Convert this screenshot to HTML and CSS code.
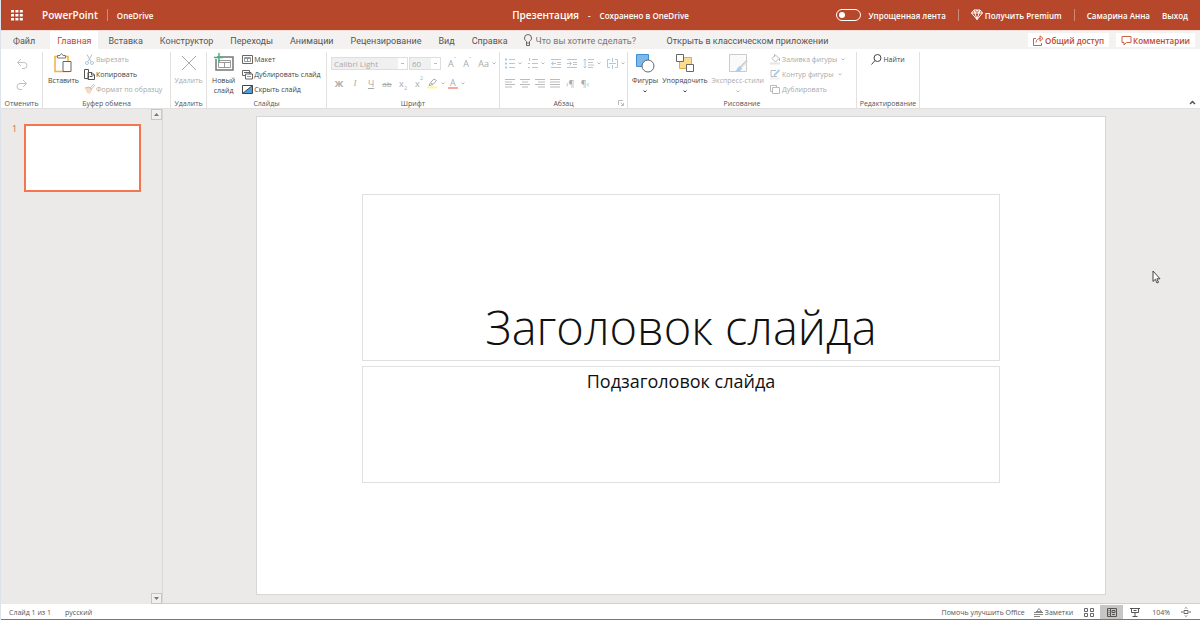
FILE: index.html
```html
<!DOCTYPE html>
<html lang="ru">
<head>
<meta charset="utf-8">
<title>Презентация - PowerPoint</title>
<link rel="stylesheet" href="styles.css">
</head>
<body>
<div class="app">
  <header class="header">
    <div class="header-left">
      <button class="waffle" aria-label="Приложения">
        <svg width="12" height="12" viewBox="0 0 12 12" fill="#fff"><path d="M0 1h3v2.600H0zM4.400 1h3v2.600h-3zM8.800 1h3v2.600h-3zM0 5h3v2.600H0zM4.400 5h3v2.600h-3zM8.800 5h3v2.600h-3zM0 9h3v2.600H0zM4.400 9h3v2.600h-3zM8.800 9h3v2.600h-3z"/></svg>
      </button>
      <a class="brand" href="#">PowerPoint</a>
      <span class="bar"></span>
      <a class="place" href="#">OneDrive</a>
    </div>
    <div class="header-title"><span class="doc-name">Презентация</span><span>-</span><span>Сохранено в OneDrive</span></div>
    <div class="header-right">
      <label class="switch"><input type="checkbox" class="switch-box"><span>Упрощенная лента</span></label>
      <span class="bar"></span>
      <button class="premium">
        <svg width="12" height="12" viewBox="0 0 12 12" fill="none" stroke="#fff"><path d="M3 1h6l2.500 3L6 10.500.5 4zM.5 4h11M3 1l1 3 2 6.500L8 4l1-3M4 4l2-3 2 3"/></svg>
        <span>Получить Premium</span>
      </button>
      <span class="bar"></span>
      <button class="user">Самарина Анна</button>
      <button class="exit">Выход</button>
    </div>
  </header>

  <nav class="tabs">
    <button class="tab tab-file">Файл</button>
    <button class="tab tab-active">Главная</button>
    <button class="tab">Вставка</button>
    <button class="tab">Конструктор</button>
    <button class="tab">Переходы</button>
    <button class="tab">Анимации</button>
    <button class="tab">Рецензирование</button>
    <button class="tab">Вид</button>
    <button class="tab">Справка</button>
    <label class="tell-me">
      <svg width="10" height="13" viewBox="0 0 10 13" fill="none" stroke="#666"><path d="M3.500 9V7.500C2.500 6.500 1.500 5.800 1.500 4a3.500 3.500 0 0 1 7 0c0 1.800-1 2.500-2 3.500V9zM3.500 9v2.500h3V9"/></svg>
      <input class="tell-input" type="text" placeholder="Что вы хотите сделать?">
    </label>
    <button class="tab">Открыть в классическом приложении</button>
    <div class="tab-actions">
      <button class="action">
        <svg width="11" height="11" viewBox="0 0 11 11" fill="none" stroke="#c9634a"><path d="M3 3.500H.5v7h8V8M3 7.500c.3-3 2-4 4.500-4M7 .8l3 2.700-3 2.700V.8"/></svg>
        <span>Общий доступ</span>
      </button>
      <button class="action">
        <svg width="11" height="11" viewBox="0 0 11 11" fill="none" stroke="#c9634a"><path d="M1 1.500h9v6H5.500L3 10V7.500H1z"/></svg>
        <span>Комментарии</span>
      </button>
    </div>
  </nav>

  <section class="ribbon">
    <div class="group g-undo">
      <div class="group-body undo-body">
        <button class="icon-btn" aria-label="Отменить"><svg width="12" height="12" viewBox="0 0 12 12" fill="none" stroke="#c2c2c2"><path d="M5 1L1.500 4.500 5 8M1.500 4.500H8a3 3 0 0 1 0 6H6"/></svg></button>
        <button class="icon-btn" aria-label="Вернуть"><svg width="12" height="12" viewBox="0 0 12 12" fill="none" stroke="#c2c2c2"><path d="M7 1l3.500 3.500L7 8M10.500 4.500H4a3 3 0 0 0 0 6h2"/></svg></button>
      </div>
      <div class="group-label">Отменить</div>
    </div>

    <div class="group g-clip">
      <div class="group-body">
        <button class="big">
          <svg width="20" height="20" viewBox="0 0 20 20" fill="#fff"><path d="M2 3.500h13v15H2z" stroke="#f0b04a" stroke-width="1.500"/><path d="M4.500 5V2.500H7Q8.500-1 10 2.500h2.500V5z" stroke="#777"/><path d="M10 8.500h8v10h-8z" stroke="#666"/></svg>
          <span>Вставить</span>
        </button>
        <div class="rows">
          <button class="row off"><svg width="11" height="11" viewBox="0 0 11 11" fill="none"><path d="M3 .5l4 7M8 .5l-4 7" stroke="#bbb"/><circle cx="3" cy="9" r="1.500" stroke="#a6cbea"/><circle cx="8" cy="9" r="1.500" stroke="#a6cbea"/></svg><span>Вырезать</span></button>
          <button class="row"><svg width="11" height="11" viewBox="0 0 11 11" fill="#fff" stroke="#555"><path d="M.5.5h4v9h-4zM4 3.500h4l2.500 2.500v4.500H4zM7.500 3.500V6h3M5.500 7.500h3"/></svg><span>Копировать</span></button>
          <button class="row off"><svg width="11" height="11" viewBox="0 0 11 11"><path d="M1 4l4-1 3 3-2 4-3-1z" fill="#fbd9bf"/><path d="M5 3l3 3M6 4l3.500-3.500 1 1L7.500 5M1 4l4-1" stroke="#c5bdb8" fill="none"/></svg><span>Формат по образцу</span></button>
        </div>
      </div>
      <div class="group-label">Буфер обмена</div>
    </div>

    <div class="group g-delete">
      <div class="group-body">
        <button class="big off">
          <svg width="20" height="20" viewBox="0 0 20 20" fill="none" stroke="#aaa"><path d="M3 3l14 14M17 3L3 17"/></svg>
          <span>Удалить</span>
        </button>
      </div>
      <div class="group-label">Удалить</div>
    </div>

    <div class="group g-slides">
      <div class="group-body">
        <button class="big">
          <svg width="20" height="20" viewBox="0 0 20 20" fill="none"><path d="M3 4h16v13H2V6" stroke="#777" stroke-width="1.500"/><path d="M4.500 7.500h12v7h-12zM4.500 9.500h12M10.500 9.500v5" stroke="#999"/><path d="M5 0v9M0 4.500h9" stroke="#43b581" stroke-width="1.500"/></svg>
          <span>Новый<br>слайд</span>
        </button>
        <div class="rows">
          <button class="row"><svg width="11" height="11" viewBox="0 0 11 11" fill="none" stroke="#666"><path d="M.5 1.500h10v8H.5z"/><path d="M2.500 3.500h6v4h-6zM2.500 4.500h6M5.500 4.500v3" stroke="#999"/></svg><span>Макет</span></button>
          <button class="row"><svg width="11" height="11" viewBox="0 0 11 11" fill="#fff" stroke="#666"><path d="M.5 1.500h7v5h-7zM2 3.500h7V5"/><path d="M3.500 5h7v5h-7z"/><path d="M5 7.500h4" stroke="#999"/></svg><span>Дублировать слайд</span></button>
          <button class="row"><svg width="11" height="11" viewBox="0 0 11 11"><path d="M.5 1.500h10v8H.5z" fill="#fff"/><path d="M10.500 1.500v8H.5z" fill="#4c9fe0"/><path d="M.5 1.500h10v8H.5zM.5 9.500l10-8" stroke="#444" fill="none"/></svg><span>Скрыть слайд</span></button>
        </div>
      </div>
      <div class="group-label">Слайды</div>
    </div>

    <div class="group g-font">
      <div class="group-body tool-body">
        <div class="tools font-top">
          <select class="pick pick-font" aria-label="Шрифт" disabled><option>Calibri Light</option></select>
          <select class="pick pick-size" aria-label="Размер шрифта" disabled><option>60</option></select>
          <button class="tool">A<sup>ˆ</sup></button>
          <button class="tool">A<sup>ˇ</sup></button>
          <button class="tool tool-case">Aa<svg class="chev"><use href="#chev"/></svg></button>
        </div>
        <div class="tools font-bottom">
          <button class="tool"><b>Ж</b></button>
          <button class="tool"><i class="serif">I</i></button>
          <button class="tool"><u>Ч</u></button>
          <button class="tool tool-small"><s>ab</s></button>
          <button class="tool">x<sub>2</sub></button>
          <button class="tool">x<sup>2</sup></button>
          <button class="tool"><svg width="11" height="11" viewBox="0 0 11 11" fill="none"><path d="M0 9.500h10" stroke="#fbf79a" stroke-width="2"/><path d="M2 7.500l1.500-3L7 1l2.500 1.500L6 6.500zM3.500 4.500L6 6.500" stroke="#aaa"/></svg><svg class="chev"><use href="#chev"/></svg></button>
          <button class="tool tool-color"><span class="color-a">A</span><svg class="chev"><use href="#chev"/></svg></button>
        </div>
      </div>
      <div class="group-label">Шрифт</div>
    </div>

    <div class="group g-para">
      <div class="group-body tool-body">
        <div class="tools para-top">
          <button class="tool" aria-label="Маркеры"><svg width="10" height="11" viewBox="0 0 10 11"><path d="M4 1.500h6M4 5.500h6M4 9.500h6" stroke="#c4c4c4"/><path d="M0 1.500h2M0 5.500h2M0 9.500h2" stroke="#a4ccec" stroke-width="2"/></svg><svg class="chev"><use href="#chev"/></svg></button>
          <button class="tool" aria-label="Нумерация"><svg width="10" height="11" viewBox="0 0 10 11" fill="none"><path d="M4 1.500h6M4 5.500h6M4 9.500h6" stroke="#c4c4c4"/><path d="M1.500 0v3M0 5.500h2M0 9.500h2" stroke="#a4ccec"/></svg><svg class="chev"><use href="#chev"/></svg></button>
          <button class="tool" aria-label="Уменьшить отступ"><svg width="10" height="11" viewBox="0 0 10 11" fill="none"><path d="M0 1.500h10M6 4.500h4M6 6.500h4M0 9.500h10" stroke="#c4c4c4"/><path d="M5 5.500H.5M2.500 3.500l-2 2 2 2" stroke="#a4ccec"/></svg></button>
          <button class="tool" aria-label="Увеличить отступ"><svg width="10" height="11" viewBox="0 0 10 11" fill="none"><path d="M0 1.500h10M6 4.500h4M6 6.500h4M0 9.500h10" stroke="#c4c4c4"/><path d="M0 5.500h4.500M2.500 3.500l2 2-2 2" stroke="#a4ccec"/></svg></button>
          <button class="tool" aria-label="Интервал"><svg width="11" height="11" viewBox="0 0 11 11" fill="none"><path d="M5 1.500h6M5 4.500h5M5 7h6M5 9.500h5" stroke="#c4c4c4"/><path d="M2 1v9M.5 2.500L2 1l1.500 1.500M.5 8.500L2 10l1.500-1.500" stroke="#a4ccec"/></svg><svg class="chev"><use href="#chev"/></svg></button>
          <button class="tool" aria-label="Направление текста"><svg width="11" height="11" viewBox="0 0 11 11" fill="none"><path d="M3 1.500H.5v8H3M8 1.500h2.500v8H8M2 5.500h7" stroke="#c4c4c4"/><path d="M5.500 0v4M5.500 7v4" stroke="#a4ccec"/></svg><svg class="chev"><use href="#chev"/></svg></button>
        </div>
        <div class="tools para-bottom">
          <button class="tool" aria-label="По левому краю"><svg width="10" height="10" viewBox="0 0 10 10" stroke="#bbb"><path d="M0 1.500h10M0 4h7M0 6.500h10M0 9h7"/></svg></button>
          <button class="tool" aria-label="По центру"><svg width="10" height="10" viewBox="0 0 10 10" stroke="#bbb"><path d="M0 1.500h10M2 4h6M0 6.500h10M2 9h6"/></svg></button>
          <button class="tool" aria-label="По правому краю"><svg width="10" height="10" viewBox="0 0 10 10" stroke="#bbb"><path d="M0 1.500h10M3 4h7M0 6.500h10M3 9h7"/></svg></button>
          <button class="tool" aria-label="По ширине"><svg width="10" height="10" viewBox="0 0 10 10" stroke="#bbb"><path d="M0 1.500h10M0 4h10M0 6.500h10M0 9h10"/></svg></button>
          <button class="tool tool-dir"><span class="blue">›</span>¶</button>
          <button class="tool tool-dir">¶<span class="blue">‹</span></button>
        </div>
      </div>
      <div class="group-label">Абзац
        <svg class="launcher" width="6" height="6" viewBox="0 0 6 6" fill="none" stroke="#bbb"><path d="M.5 5V.5H5M2.500 2.500l3 3M5.500 3v2.500H3"/></svg>
      </div>
    </div>

    <div class="group g-draw">
      <div class="group-body">
        <button class="big">
          <svg width="20" height="20" viewBox="0 0 20 20"><path d="M1.500 1.500h12v12h-12z" fill="#7db8ea" stroke="#3f8fd2"/><circle cx="13" cy="13" r="6" fill="#fff" stroke="#666"/></svg>
          <span>Фигуры</span><svg class="chev dark"><use href="#chev"/></svg>
        </button>
        <button class="big">
          <svg width="20" height="20" viewBox="0 0 20 20"><path d="M4.500 4.500h12v11h-12z" fill="#fbdc8e" stroke="#eaa944"/><path d="M1.500 1.500h7v7h-7zM11.500 11.500h7v7h-7z" fill="#fff" stroke="#666"/></svg>
          <span>Упорядочить</span><svg class="chev dark"><use href="#chev"/></svg>
        </button>
        <button class="big off">
          <svg width="20" height="20" viewBox="0 0 20 20"><path d="M1.500 1.500h17v17h-17z" fill="#fafafa" stroke="#ccc"/><path d="M19 8l-7 7" stroke="#bbb" stroke-width="2"/><path d="M19 8.500L12.500 15" stroke="#fff"/><path d="M12 13l2 2c-1 4-4 4-8 4 3-1 3-5 6-6z" fill="#a9d0f0"/></svg>
          <span>Экспресс-стили</span><svg class="chev"><use href="#chev"/></svg>
        </button>
        <div class="rows">
          <button class="row off"><svg width="11" height="11" viewBox="0 0 11 11" fill="none"><path d="M2 4.500L5.500 1 9 4.500 5.500 8zM4.500 3V0" stroke="#bbb"/><path d="M9.500 4v3" stroke="#8fc0e8"/><path d="M0 9.500h10" stroke="#e5e5e5" stroke-width="2"/></svg><span>Заливка фигуры</span><svg class="chev"><use href="#chev"/></svg></button>
          <button class="row off"><svg width="11" height="11" viewBox="0 0 11 11" fill="none"><path d="M6 1.500H1v6h6" stroke="#bbb"/><path d="M4 6.500L9.500 1" stroke="#a8cfee" stroke-width="2"/><path d="M0 9.500h10" stroke="#eee" stroke-width="2"/></svg><span>Контур фигуры</span><svg class="chev"><use href="#chev"/></svg></button>
          <button class="row off"><svg width="11" height="11" viewBox="0 0 11 11" fill="#fff" stroke="#bbb"><path d="M.5 1.500h6v6h-6z"/><path d="M2.500 3.500h7v6h-7z"/></svg><span>Дублировать</span></button>
        </div>
      </div>
      <div class="group-label">Рисование</div>
    </div>

    <div class="group g-edit">
      <div class="group-body">
        <button class="row"><svg width="11" height="11" viewBox="0 0 11 11" fill="none" stroke="#444"><circle cx="6.500" cy="4" r="3.500"/><path d="M4 6.500L.5 10.500"/></svg><span>Найти</span></button>
      </div>
      <div class="group-label">Редактирование</div>
    </div>
    <button class="collapse" aria-label="Свернуть ленту"><svg width="7" height="5" viewBox="0 0 7 5" fill="none" stroke="#555" stroke-width="1.500"><path d="M1 4l2.500-2.500L6 4"/></svg></button>
  </section>

  <main class="work">
    <aside class="panel">
      <div class="thumbs"><span class="thumb-num">1</span><button class="thumb" aria-label="Слайд 1"></button></div>
      <div class="scroll">
        <button class="scroll-btn" aria-label="Вверх"><svg width="5" height="3" viewBox="0 0 5 3" fill="#777"><path d="M0 3L2.500 0 5 3z"/></svg></button>
        <button class="scroll-btn" aria-label="Вниз"><svg width="5" height="3" viewBox="0 0 5 3" fill="#777"><path d="M0 0h5L2.500 3z"/></svg></button>
      </div>
    </aside>
    <div class="stage">
      <article class="slide">
        <h1 class="slide-title">Заголовок слайда</h1>
        <p class="slide-sub">Подзаголовок слайда</p>
      </article>
    </div>
  </main>

  <footer class="status">
    <span>Слайд 1 из 1</span>
    <button class="status-lang">русский</button>
    <div class="status-right">
      <button>Помочь улучшить Office</button>
      <button class="notes"><svg width="10" height="9" viewBox="0 0 10 9" fill="none" stroke="#888"><path d="M0 4.500h9M0 6.500h9M0 8.500h6M2 3.500h6"/><path d="M3 3l2-2.500L7 3"/></svg><span>Заметки</span></button>
      <button class="view" aria-label="Сортировщик"><svg width="10" height="9" viewBox="0 0 10 9" fill="none" stroke="#666"><path d="M.5.5h3v3h-3zM6.500.5h3v3h-3zM.5 5.500h3v3h-3zM6.500 5.500h3v3h-3z"/></svg></button>
      <button class="view view-on" aria-label="Обычный"><svg width="10" height="9" viewBox="0 0 10 9" fill="none" stroke="#555"><path d="M.5.5h9v8h-9zM3.500.5v8M5 2.500h3v2H5zM5 6.500h3M1.500 2.500h1M1.500 4.500h1M1.500 6.500h1"/></svg></button>
      <button class="view" aria-label="Показ слайдов"><svg width="10" height="9" viewBox="0 0 10 9" fill="none" stroke="#555"><path d="M0 .5h10M1.500.5v4h7v-4M5 4.500v4M2.500 8.500h5M3.500 2.500h3"/></svg></button>
      <button class="zoom">104%</button>
      <button class="fit" aria-label="По размеру окна"><svg width="10" height="10" viewBox="0 0 10 10" fill="none" stroke="#666"><path d="M3 3.500h4v3H3zM4 1.500l1-1 1 1M4 8.500l1 1 1-1M1.500 4l-1 1 1 1M8.500 4l1 1-1 1"/></svg></button>
    </div>
  </footer>

  <svg class="cursor" width="9" height="14" viewBox="0 0 9 14"><path d="M1 1v10.500l2.300-2.200 1.700 3.700 1.500-.7-1.600-3.500H8z" fill="#fff" stroke="#444"/></svg>
</div>
<svg class="defs" width="0" height="0"><symbol id="chev" viewBox="0 0 4 3"><path d="M.5.5L2 2 3.500.5" fill="none" stroke="currentColor"/></symbol></svg>
</body>
</html>
```
FILE: styles.css
```css
* { box-sizing: border-box; }
body { margin: 0; font-family: "Open Sans", "Noto Sans", sans-serif; font-size: 7px; color: #444; background: #ebeae8; }
button, input, select { font: inherit; color: inherit; background: none; border: 0; padding: 0; margin: 0; }
button { display: flex; align-items: center; white-space: nowrap; }
a { color: inherit; text-decoration: none; }
svg { flex: none; display: block; }
.defs { position: absolute; }

.app { position: relative; min-height: 100vh; display: flex; flex-direction: column; border-left: 1px solid #dde3ea; }

.header { height: 30px; display: grid; grid-template-columns: 1fr auto 1fr; align-items: center; background: #b7472a; color: #fff; font-size: 8px; font-weight: 600; }
.header-left, .header-right, .header-title { display: flex; align-items: center; }
.header-left { padding-left: 10px; }
.waffle { width: 31px; }
.brand { font-size: 10px; }
.bar { width: 1px; height: 12px; background: #d08a74; margin: 0 9px; }
.header-title { gap: 9px; }
.doc-name { font-size: 10px; }
.header-right { justify-content: flex-end; padding-right: 12px; }
.header-right .bar { margin: 0 12px; }
.switch { display: flex; align-items: center; gap: 7px; }
.switch-box { appearance: none; width: 25px; height: 12px; border: 1px solid #fff; border-radius: 6px; display: flex; align-items: center; padding-left: 2px; }
.switch-box::before { content: ""; width: 6px; height: 6px; border-radius: 50%; background: #fff; }
.premium { gap: 2px; }
.exit { margin-left: 12px; }

.tabs { height: 19px; display: flex; align-items: stretch; gap: 3px; padding: 0 5px; background: #f3f2f1; border-top: 1px solid #f3dfd9; font-family: Roboto, "Noto Sans", sans-serif; font-size: 9px; color: #555; }
.tab { padding: 1px 7px 0; }
.tab-file { margin-right: 5px; }
.tab-active { background: #fff; color: #c0492b; }
.tell-me { display: flex; align-items: center; gap: 3px; padding-left: 5px; color: #777; }
.tell-input { width: 121px; padding-top: 1px; }
.tell-input::placeholder { color: #777; }
.tab-actions { margin-left: auto; display: flex; align-items: center; gap: 7px; }
.action { height: 14px; gap: 1px; padding: 0 5px; background: #fff; color: #c0492b; font-family: "Open Sans", sans-serif; font-size: 8px; font-weight: 600; }

.ribbon { display: flex; background: #fff; padding-top: 3px; border-bottom: 1px solid #e1dfdd; }
.group { flex: none; display: flex; flex-direction: column; border-right: 1px solid #e3e1df; }
.group-body { height: 47px; display: flex; align-items: flex-start; }
.group-label { position: relative; height: 9px; line-height: 9px; text-align: center; color: #555; }
.launcher { position: absolute; right: 3px; top: 1px; }
.g-undo { width: 42px; }
.g-clip { width: 128px; }
.g-delete { width: 36px; }
.g-slides { width: 120px; }
.g-font { width: 173px; }
.g-para { width: 128px; }
.g-draw { width: 229px; }
.g-edit { width: 63px; }
.g-edit .group-body, .g-delete .group-body { justify-content: center; }
.undo-body { flex-direction: column; align-items: center; justify-content: space-around; padding: 2px 0 4px; }
.big { flex-direction: column; padding: 1px 5px 0; line-height: 10px; }
.big span { margin-top: 3px; }
.g-draw .big { padding: 1px 0 0 4px; }
.g-draw .rows { padding-left: 6px; }
.g-slides .rows { padding-left: 2px; }
.off { color: #aaa; }
.rows { display: flex; flex-direction: column; }
.row { height: 15px; gap: 1px; }
.chev { width: 4px; height: 3px; margin-left: 3px; color: #bbb; }
.big .chev { margin: 4px 0 0; }
.big .dark { color: #444; }

.tool-body { flex-direction: column; color: #aaa; }
.tools { display: flex; align-items: center; }
.tool { height: 16px; justify-content: center; font-size: 9px; }
.tool-small { font-size: 8px; }
.tool-dir { width: 10px; }
.tool sup, .tool sub { font-size: 6px; line-height: 6px; color: #8fc0e8; }
.tool sup { align-self: flex-start; }
.tool sub { align-self: flex-end; }
.serif { font-family: "Liberation Serif", serif; }
.font-top { padding-left: 4px; gap: 7px; height: 23px; }
.pick { appearance: none; height: 13px; padding-left: 2px; border: 1px solid #dedede; font-size: 8px; color: #aaa; opacity: 1; background: linear-gradient(#bbb, #bbb) right 3px center / 3px 1px no-repeat, linear-gradient(#fff, #fff) right / 9px 100% no-repeat, #f0f0f0; }
.pick-font { width: 77px; }
.pick-size { width: 32px; margin-left: -6px; }
.font-bottom { padding-left: 4px; height: 16px; }
.font-bottom .tool { min-width: 16px; }
.tool-color { margin-left: 3px; }
.color-a { line-height: 9px; border-bottom: 2px solid #f7a8a0; padding: 0 2px; }
.para-top { padding-left: 5px; gap: 6px; height: 23px; }
.para-bottom { padding-left: 5px; gap: 5px; height: 16px; }
.blue { color: #8fc0e8; }
.collapse { margin: auto 4px 3px auto; }

.work { flex: 1; display: flex; }
.panel { width: 162px; display: flex; border-right: 1px solid #d8d8d8; }
.thumbs { flex: 1; display: flex; align-items: flex-start; padding: 15px 10px 0 11px; gap: 8px; }
.thumb-num { width: 4px; line-height: 9px; font-size: 9px; color: #e8613c; }
.thumb { flex: 1; aspect-ratio: 117 / 68; background: #fff; border: 2px solid #f4764f; }
.scroll { width: 11px; display: flex; flex-direction: column; justify-content: space-between; }
.scroll-btn { height: 11px; justify-content: center; border: 1px solid #c6c6c6; background: #f0f0f0; }
.stage { flex: 1; padding: 7px 94px 8px 93px; border-bottom: 1px solid #d0d0d0; display: flex; }
.slide { flex: 1; background: #fff; border: 1px solid #d6d6d6; padding: 77px 105px 0; color: #111; display: flex; flex-direction: column; gap: 5px; }
.slide-title, .slide-sub { margin: 0; border: 1px solid #e0e0e0; text-align: center; }
.slide-title { height: 167px; display: flex; align-items: flex-end; justify-content: center; padding-bottom: 5px; font-size: 47px; font-weight: 300; line-height: 56px; }
.slide-sub { height: 117px; font-size: 18px; font-weight: 400; line-height: 28px; }

.status { height: 16px; display: flex; align-items: center; gap: 14px; padding: 1px 0 0 8px; background: #fff; border-bottom: 1px solid #777; color: #555; }
.status-right { margin-left: auto; height: 100%; display: flex; align-items: stretch; padding-right: 9px; }
.notes { gap: 1px; margin: 0 4px 0 9px; }
.view { width: 23px; justify-content: center; }
.view-on { background: #c8c6c4; }
.zoom { padding: 0 11px 0 6px; }

.cursor { position: absolute; left: 1151px; top: 270px; }
```
